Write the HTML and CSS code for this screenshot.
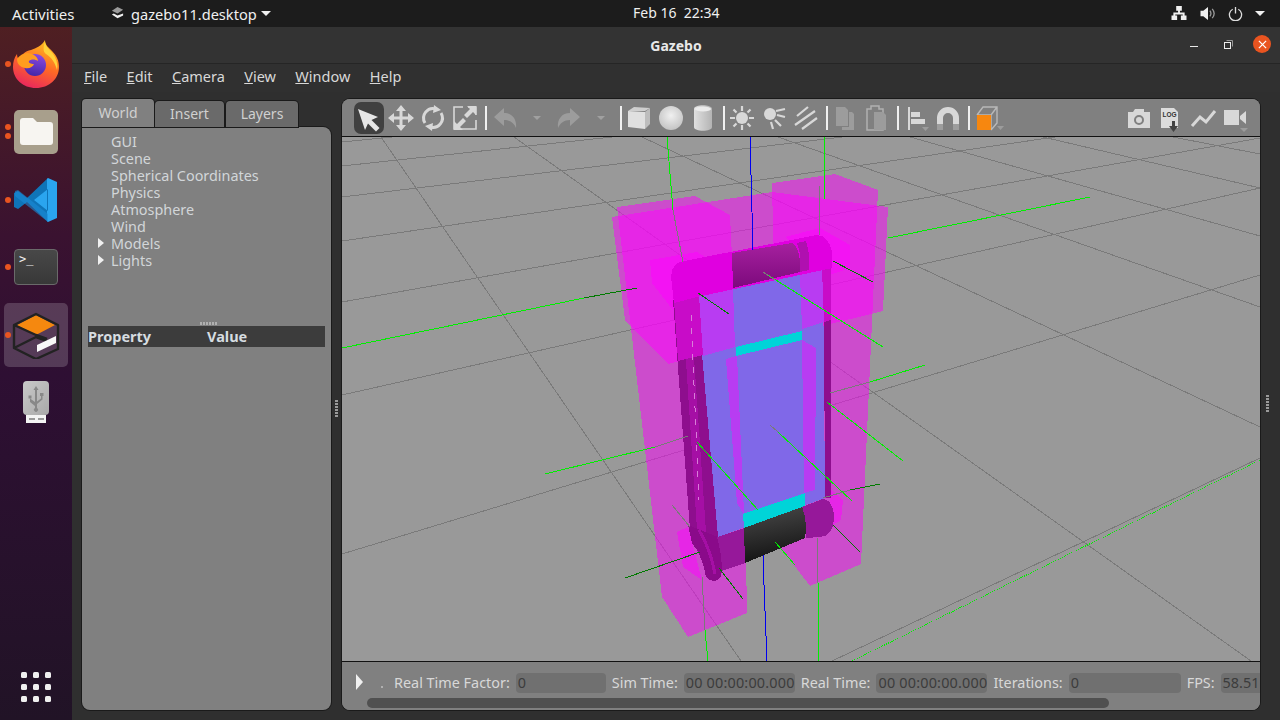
FILE: index.html
```html
<!DOCTYPE html>
<html lang="en">
<head>
  <meta charset="UTF-8" />
  <title>Gazebo</title>
  <link rel="stylesheet" href="styles.css">
</head>
<body>
  <header class="topbar">
    <div class="top-left">
      <span class="activities">Activities</span>
      <span class="app-menu">
        <svg class="app-icon" viewBox="0 0 16 16"><path class="ic-grey" d="M2 5l6-4 6 3-6 4z"/><path class="ic-white" d="M2 9l2-1 4 2 6-2v2l-6 3z"/></svg>
        gazebo11.desktop
        <i class="caret"></i>
      </span>
    </div>
    <div class="clock">Feb 16&nbsp;&nbsp;22:34</div>
    <div class="tray">
      <svg class="tray-net" viewBox="0 0 16 16"><path class="ic-white" d="M5 0h6v5H9v2h5v3h2v5h-6v-5h2V9H4v1h2v5H0v-5h2V7h5V5H5z"/></svg>
      <svg class="tray-vol" viewBox="0 0 16 16"><path class="ic-white" d="M0 5h3l5-4v14l-5-4H0z"/><path class="ic-line" d="M10 5c1.500 2 1.500 4 0 6M12.500 3c2.500 3 2.500 7 0 10"/></svg>
      <svg class="tray-pow" viewBox="0 0 16 16"><path class="ic-line-w" d="M5 3.500a6.500 6.500 0 1 0 6 0M8 1v7"/></svg>
      <i class="caret"></i>
    </div>
  </header>

  <div class="desktop">
    <nav class="dock">
      <div class="dock-item">
        <i class="pip pip-1"></i>
        <svg class="dock-icon" viewBox="0 0 48 48">
          <defs>
            <linearGradient id="ffBody" x1="0.7" y1="0" x2="0.3" y2="1"><stop offset="0" stop-color="#ffc21f"/><stop offset="0.5" stop-color="#ff6a25"/><stop offset="1" stop-color="#e8255f"/></linearGradient>
            <linearGradient id="ffBall" x1="0.6" y1="0" x2="0.4" y2="1"><stop offset="0" stop-color="#8c4ae0"/><stop offset="1" stop-color="#4226a8"/></linearGradient>
          </defs>
          <path fill="url(#ffBody)" d="M33 0c0 5 3 7 7 11 5 5 7 10 7 16 0 12-10 21-23 21S1 39 1 27c0-5 1-9 4-13 0 3 1 5 3 6 1-5 5-9 11-10 5-2 11-4 14-10z"/>
          <circle cx="23" cy="25" r="11" fill="url(#ffBall)"/>
          <path fill="#ff9d1f" d="M5 19c4-6 12-8 17-4 3 2 4 4 4 6-3-2-7-2-9 0-1 2 2 3 5 3-1 3-5 5-9 4-5-1-8-4-8-9z"/>
          <path fill="#ffd23a" d="M33 2c1 6 6 8 10 15 2 4 3 9 2 13-2-8-6-13-11-16-3-2-3-7-1-12z"/>
        </svg>
      </div>
      <div class="dock-item">
        <i class="pip pip-2a"></i><i class="pip pip-2b"></i>
        <svg class="dock-icon" viewBox="-1 0 48 48">
          <rect x="1" y="2" width="44" height="44" rx="5" fill="#a89f8c"/>
          <path fill="#f7f5f1" d="M7 13a3 3 0 0 1 3-3h10l4 4h13a3 3 0 0 1 3 3v17a3 3 0 0 1-3 3H10a3 3 0 0 1-3-3z"/>
        </svg>
      </div>
      <div class="dock-item">
        <i class="pip pip-1"></i>
        <svg class="dock-icon" viewBox="0 0 48 48">
          <path fill="#0f74b8" d="M36 2L15 22 6 15l-4 2v14l4 2 9-7 21 20z"/>
          <path fill="#2aa5ef" d="M36 2l9 4v36l-9 4-1-1V3zM36 13L22 24l14 11z"/>
          <path fill="#1a8ad6" d="M3 15l3-1 30 24v8L3 20z" opacity="0.6"/>
        </svg>
      </div>
      <div class="dock-item">
        <i class="pip pip-1"></i>
        <div class="term-icon">&gt;_</div>
      </div>
      <div class="dock-item dock-active">
        <i class="pip pip-1"></i>
        <svg class="dock-icon" viewBox="0 0 48 48">
          <path fill="#f5880f" d="M5 14L24 4l19 10-19 10z"/>
          <path class="gz-line" d="M2 14L24 3l22 11-0 24-22 10L2 37zM2 14l22 10 11 4M2 37l22-11 11 4"/>
          <path fill="#f8f8f8" d="M25 41v-7l19-9v7z"/>
        </svg>
      </div>
      <div class="dock-item">
        <svg class="dock-icon" viewBox="0 -3 48 48">
          <defs><linearGradient id="usbBody" x1="0" y1="0" x2="1" y2="1"><stop offset="0" stop-color="#c9c9c9"/><stop offset="1" stop-color="#a9a9a9"/></linearGradient></defs>
          <path fill="#f4f4f4" d="M14 34h20v8H14z"/>
          <path fill="#9a9a9a" d="M17 37h6v2h-6zM26 37h6v2h-6z"/>
          <rect x="11" y="0" width="26" height="34" rx="4" fill="url(#usbBody)"/>
          <path fill="#888" d="M24 5l2.500 4h-1.500v11.500l4-3V15h-1v-3h3.500v3h-1v3.500l-5.500 4.500V27a2 2 0 1 1-2 0v-2l-5-4v-3.500h-1.500v-3h3v3H18l5 3.500V9h-1.500z"/>
        </svg>
      </div>
      <div class="dock-spacer"></div>
      <div class="apps-grid">
        <i></i><i></i><i></i><i></i><i></i><i></i><i></i><i></i><i></i>
      </div>
    </nav>

    <main class="window">
      <div class="titlebar">
        <span class="title">Gazebo</span>
        <div class="win-btns">
          <i class="win-min"></i>
          <svg class="win-max" viewBox="0 0 9 9"><path class="max-back" d="M2.500 0.500h6v6"/><rect class="max-front" x="0.500" y="2.500" width="6" height="6"/></svg>
          <span class="win-close"><svg viewBox="0 0 10 10"><path d="M1 1l8 8M9 1l-8 8"/></svg></span>
        </div>
      </div>

      <div class="menubar">
        <span><u>F</u>ile</span>
        <span><u>E</u>dit</span>
        <span><u>C</u>amera</span>
        <span><u>V</u>iew</span>
        <span><u>W</u>indow</span>
        <span><u>H</u>elp</span>
      </div>

      <div class="workspace">
        <section class="side">
          <div class="tabs">
            <div class="tab tab-on">World</div>
            <div class="tab">Insert</div>
            <div class="tab tab-last">Layers</div>
          </div>
          <div class="side-panel">
            <ul class="tree">
              <li>GUI</li>
              <li>Scene</li>
              <li>Spherical Coordinates</li>
              <li>Physics</li>
              <li>Atmosphere</li>
              <li>Wind</li>
              <li class="has-kids">Models</li>
              <li class="has-kids">Lights</li>
            </ul>
            <div class="h-handle"></div>
            <div class="props-head"><span class="prop-name">Property</span><span>Value</span></div>
          </div>
        </section>

        <div class="v-handle"></div>

        <section class="scene-panel">
          <div class="toolbar">
            <button class="tb tb-on"><svg viewBox="0 0 32 32"><path class="t-bright" d="M5 7l20 8-6.500 3 8 8-3.500 3.500-8-8-3 6.500z"/></svg></button>
            <button class="tb"><svg viewBox="0 0 32 32"><path class="t-light" d="M16 3l5 6h-3.500v5.500H23V11l6 5-6 5v-3.500h-5.500V23H21l-5 6-5-6h3.500v-5.500H9V21l-6-5 6-5v3.500h5.500V9H11z"/></svg></button>
            <button class="tb"><svg viewBox="0 0 32 32"><path class="t-stroke" d="M8 21a9.500 9.500 0 0 1 11-14M24 11a9.500 9.500 0 0 1-11 14"/><path class="t-light" d="M17 3l7 5-8 3zM15 29l-7-5 8-3z"/></svg></button>
            <button class="tb"><svg viewBox="0 0 32 32"><path class="t-thin" d="M14 5H5v22h22v-9M5 5"/><path class="t-thin" d="M27 13V5h-8"/><path class="t-light" d="M27 4v9l-3-3-6 6-3-3 6-6-3-3zM5 28v-9l3 3 6-6 3 3-6 6 3 3z"/></svg></button>
            <i class="sep sep-first"></i>
            <button class="tb"><svg viewBox="0 0 32 32"><path class="t-dim" d="M5 15l10-9v5c8 0 13 6 12 15-2-5-6-8-12-8v6z"/></svg></button>
            <button class="tb"><i class="drop"></i></button>
            <button class="tb"><svg viewBox="0 0 32 32"><path class="t-dim" d="M27 15L17 6v5C9 11 4 17 5 26c2-5 6-8 12-8v6z"/></svg></button>
            <button class="tb"><i class="drop"></i></button>
            <i class="sep sep-second"></i>
            <button class="tb"><svg viewBox="0 0 32 32"><path fill="#cfcfcf" d="M5 9l6-4 16 1-5 3z"/><path fill="#e0e0e0" d="M5 9l17 1v17L5 25z"/><path fill="#bdbdbd" d="M22 10l5-4v16l-5 5z"/></svg></button>
            <button class="tb"><svg viewBox="0 0 32 32"><defs><radialGradient id="ball" cx="0.5" cy="0.4" r="0.7"><stop offset="0" stop-color="#f0f0f0"/><stop offset="1" stop-color="#bdbdbd"/></radialGradient></defs><circle cx="16" cy="16" r="12" fill="url(#ball)"/></svg></button>
            <button class="tb"><svg viewBox="0 0 32 32"><defs><linearGradient id="cyl"><stop offset="0" stop-color="#e0e0e0"/><stop offset="1" stop-color="#b4b4b4"/></linearGradient></defs><path fill="url(#cyl)" d="M7 7c0-5 18-5 18 0v18c0 5-18 5-18 0z"/><ellipse cx="16" cy="7" rx="8" ry="2.500" fill="#ececec"/></svg></button>
            <i class="sep"></i>
            <button class="tb"><svg viewBox="0 0 32 32"><circle cx="16" cy="16" r="6" class="t-light"/><path class="t-stroke-thin" d="M16 4v5M16 23v5M4 16h5M23 16h5M7.500 7.500l3 3M21.500 21.500l3 3M7.500 24.500l3-3M21.500 10.500l3-3"/></svg></button>
            <button class="tb"><svg viewBox="0 0 32 32"><circle cx="12" cy="12" r="6" class="t-light"/><path class="t-stroke-thin" d="M18 9l9-2M19 13l8 2M17 18l6 6M13 20l2 7"/></svg></button>
            <button class="tb"><svg viewBox="0 0 32 32"><path class="t-stroke-thin" d="M7 14L18 5M5 23L25 9M12 27L27 16"/></svg></button>
            <i class="sep"></i>
            <button class="tb"><svg viewBox="0 0 32 32"><path class="t-dim" d="M7 5h9l3 3v16H7z"/><path class="t-dim" d="M20 10h3l2 2v16H13v-3h7z"/></svg></button>
            <button class="tb"><svg viewBox="0 0 32 32"><path class="t-frame" d="M6 7h4V4h8v3h4v21H6z"/><path class="t-dim" d="M13 10h9l3 3v15H13z"/></svg></button>
            <i class="sep"></i>
            <button class="tb"><svg viewBox="0 0 32 32"><path class="t-light" d="M8 5h2v23H8zM11 10h9v5h-9zM11 17h14v5H11z"/><path class="t-dim" d="M22 25h7l-3.500 4z"/></svg></button>
            <button class="tb"><svg viewBox="0 0 32 32"><path class="t-light" d="M5 28V16a11 11 0 0 1 22 0v12h-6V16a5 5 0 0 0-10 0v12z"/><path fill="#9d9d9d" d="M5 22h6v6H5zM21 22h6v6h-6z"/></svg></button>
            <i class="sep sep-last"></i>
            <button class="tb"><svg viewBox="0 0 32 32"><path class="t-wire" d="M4 13l6-8h14v16l-6 7M18 13l6-8M4 13h14v15"/><rect x="4" y="13" width="14" height="15" fill="#f7870f"/><path class="t-dim" d="M24 24h7l-3.500 4z"/></svg></button>
            <div class="tb-spacer"></div>
            <button class="tb"><svg viewBox="0 0 32 32"><path class="t-light" fill-rule="evenodd" d="M5 10h5l2-3h9v3h6v16H5zM16 13a5 5 0 1 0 0 10 5 5 0 0 0 0-10zM16 15a3 3 0 1 1 0 6 3 3 0 0 1 0-6z"/></svg></button>
            <button class="tb"><svg viewBox="0 0 32 32"><path fill="#dcdcdc" d="M6 6h13l4 4v16H6z"/><path fill="#444" d="M17 19h3v5h3l-4.500 6-4.500-6h3z"/><text x="7.500" y="15" class="log-text">LOG</text></svg></button>
            <button class="tb"><svg viewBox="0 0 32 32"><path class="t-stroke" d="M5 24l8-9 6 5 9-11"/></svg></button>
            <button class="tb"><svg viewBox="0 0 32 32"><path class="t-light" d="M5 8h15v15H5zM21 14l6-5v13l-6-5z"/><path class="t-dim" d="M21 26h8l-4 4z"/></svg></button>
          </div>

          <div class="viewport">
            <svg class="scene" viewBox="342 137 918 524" preserveAspectRatio="none">
              <defs>
                <linearGradient id="tubeTop" x1="0" y1="0" x2="0" y2="1"><stop offset="0" stop-color="#a6209f"/><stop offset="1" stop-color="#7c0a7c"/></linearGradient>
                <linearGradient id="tubeLow" x1="0" y1="0" x2="0.200" y2="1"><stop offset="0" stop-color="#4a4a4a"/><stop offset="1" stop-color="#141414"/></linearGradient>
              </defs>

              <g class="grid">
                <path d="M342 142L392 137M342 166L612 137M342 197L842 137M342 241L1055 137M342 302L1260 138M342 395L1260 188M342 554L1260 275M832 661L1260 458"/>
                <path d="M381 137L741 661M514 137L1251 661M642 137L1260 427M778 137L1260 307M910 137L1260 236M1043 137L1260 188M1173 137L1260 154"/>
              </g>
              <path class="dots" d="M852 661L1260 460"/>

              <g class="hull">
                <path d="M612 217L772 192L888 207L883 311L668 364L625 320Z"/>
                <path d="M617 207L695 196L730 215L746 557L747 613L688 637L662 597Z"/>
                <path d="M772 183L835 174L878 190L861 564L810 586L780 547Z"/>
                <path d="M650 260L697 252L718 265L718 293L673 310L652 283Z"/>
                <path d="M785 237L820 228L850 245L850 268L830 275Z"/>
                <path d="M677 532L688 527L702 580L683 567Z"/>
                <path d="M828 487L843 500L841 520L833 525Z"/>
              </g>

              <path class="plate" d="M697 297L823 268L825 498L718 537Z"/>
              <path class="plate-on" d="M697 297L733 288L735 347L703 356Z"/>
              <path class="plate-on" d="M800 274L823 268L824 322L802 329Z"/>
              <path class="plate-on" d="M726 359L737 356L744 513L743 513L737 503Z"/>
              <path class="plate-on" d="M802 340L816 348L815 490L804 493Z"/>
              <path class="cyan" d="M736 347L802 331L802 340L736 356Z"/>
              <path class="cyan" d="M743 514L805 493L805 507L744 528Z"/>

              <path class="rail" d="M673 300L697 297L718 537L690 530Z"/>
              <path class="rail-in" d="M682 300L690 299L706 532L697 530Z"/>
              <path class="rail-top" d="M672 270L697 265L703 355L678 361Z"/>
              <path class="rail" d="M824 322L831 320L831 498L825 498Z"/>
              <path class="rail-top" d="M822 268L831 265L831 320L824 322Z"/>
              <path class="dash" d="M691 315L699 500"/>

              <path class="tube-on" d="M671 276C672 266 676 262 684 261L812 236C822 232 830 240 832 252L832 268L823 270L697 297L674 303Z"/>
              <path class="tube" fill="url(#tubeTop)" d="M732 253L792 243C798 246 801 258 800 272L733 288Z"/>
              <path class="tube-edge" d="M797 243L806 241C809 250 810 260 809 270L800 272C801 258 800 250 797 243Z"/>

              <path class="joint" d="M688 525L718 537C722 550 724 570 720 578C716 583 709 581 706 577C704 566 700 552 692 543Z"/>
              <path class="joint-in" d="M699 530C706 542 712 556 715 574"/>
              <path class="tube-low" d="M717 537L744 528L745 563L722 571C722 560 720 548 717 537Z"/>
              <path class="tube-low" d="M802 507L820 500C828 496 834 506 834 518C834 530 828 537 820 537L806 538Z"/>
              <path class="tube" fill="url(#tubeLow)" d="M744 528L802 507C806 516 807 527 805 538L745 563Z"/>

              <g class="ax-g">
                <path d="M667 137L673 210M825 137L824 200M342 348L584 298M888 238L1090 197M763 272L883 347M545 474L655 447M697 442L758 510M778 432L852 501M827 402L903 461M870 382L925 365M775 542L795 565M705 630L708 661M818 583L818 661"/>
              </g>
              <g class="ax-d">
                <path d="M584 298L637 288M698 293L729 314M833 261L873 282M833 525L860 552M850 490L880 484M625 578L700 552M719 568L743 599"/>
              </g>
              <g class="ax-m">
                <path d="M673 210L683 262M819 186L819 235M655 447L688 436M763 272L775 280M770 425L778 432M830 393L870 382M823 498L850 490M672 505L690 527M702 577L705 630M817 537L818 583"/>
              </g>
              <path class="ax-b" d="M750 137L752 212L753 250M763 555L764 585L767 661"/>
            </svg>
          </div>

          <div class="statusbar">
            <div class="stat-row">
              <i class="play"></i>
              <i class="dot"></i>
              <label class="stat-label">Real Time Factor:</label>
              <span class="field f-rtf">0</span>
              <label class="stat-label">Sim Time:</label>
              <span class="field f-time">00 00:00:00.000</span>
              <label class="stat-label">Real Time:</label>
              <span class="field f-time">00 00:00:00.000</span>
              <label class="stat-label">Iterations:</label>
              <span class="field f-iter">0</span>
              <label class="stat-label">FPS:</label>
              <span class="field f-fps">58.51</span>
            </div>
            <div class="hscroll"></div>
          </div>
        </section>

        <div class="v-handle v-handle-r"></div>
      </div>
    </main>
  </div>
</body>
</html>
```

FILE: styles.css
```css
* { box-sizing: border-box; }
html, body { margin: 0; height: 100%; overflow: hidden; }
body { font-family: "Noto Sans", sans-serif; font-size: 14.4px; color: #d8d8d8; background: #2f2f2f; display: flex; flex-direction: column; }

/* top bar */
.topbar { height: 27px; background: #1c1c1c; color: #f0f0f0; display: flex; align-items: center; position: relative; font-size: 14.6px; }
.top-left { display: flex; align-items: center; padding-left: 12px; }
.activities { width: 98px; font-size: 15px; }
.app-menu { display: flex; align-items: center; gap: 6px; }
.app-menu .caret { margin-left: -2px; }
.app-icon { width: 15px; height: 15px; }
.ic-grey { fill: #9a9a9a; }
.ic-white { fill: #f0f0f0; }
.ic-line { fill: none; stroke: #999; stroke-width: 1.4; }
.ic-line-w { fill: none; stroke: #ddd; stroke-width: 1.4; }
.caret { display: inline-block; width: 0; height: 0; border-left: 5px solid transparent; border-right: 5px solid transparent; border-top: 5px solid #f0f0f0; }
.clock { position: absolute; left: 633px; top: 4px; line-height: 18px; font-size: 14px; }
.tray { margin-left: auto; display: flex; align-items: center; padding-right: 15px; }
.tray-net { width: 16px; height: 15px; margin-right: 13px; }
.tray-vol { width: 16px; height: 15px; margin-right: 12px; }
.tray-pow { width: 15px; height: 15px; margin-right: 12px; }

.desktop { flex: 1; display: flex; min-height: 0; }

/* dock */
.dock { width: 72px; padding-top: 3.4px; padding-bottom: 18px; display: flex; flex-direction: column; align-items: center; background: linear-gradient(180deg, #4f1f22 0, #3a1230 30%, #2e0f33 50%, #211326 100%); }
.dock-item { width: 64px; height: 64px; margin: 2px 0 1.6px; display: flex; align-items: center; justify-content: center; position: relative; border-radius: 5px; }
.dock-active { background: rgba(255, 255, 255, 0.18); }
.dock-icon { width: 48px; height: 48px; }
.pip { position: absolute; left: 1px; top: 29px; width: 6px; height: 6px; border-radius: 50%; background: #e95420; }
.pip-2a { top: 24px; }
.pip-2b { top: 33px; }
.term-icon { width: 44px; height: 36px; border-radius: 4px; background: linear-gradient(#484848, #383838); border: 1px solid #6a6a6a; color: #f0f0f0; font-family: "DejaVu Sans Mono", monospace; font-size: 12px; line-height: 14px; padding: 2px 0 0 4px; }
.gz-line { fill: none; stroke: #222; stroke-width: 2.4; stroke-linejoin: round; }
.dock-spacer { flex: 1; }
.apps-grid { display: grid; grid-template-columns: repeat(3, 6px); gap: 6px; }
.apps-grid i { width: 6px; height: 6px; border-radius: 1.5px; background: #f0f0f0; }

/* window */
.window { flex: 1; display: flex; flex-direction: column; min-width: 0; background: #2f2f2f; }
.titlebar { height: 37px; background: #333; border-bottom: 1px solid #252525; display: flex; align-items: center; justify-content: center; position: relative; }
.title { font-weight: 700; font-size: 14px; color: #e8e8e8; }
.win-btns { position: absolute; right: 9px; top: 8px; display: flex; align-items: center; }
.win-min { width: 8px; height: 1px; background: #e8e8e8; margin-right: 26px; margin-top: 4px; }
.win-max { width: 9px; height: 9px; margin-right: 20px; }
.max-back { fill: none; stroke: #999; }
.max-front { fill: none; stroke: #eee; }
.win-close { width: 18px; height: 18px; border-radius: 50%; background: #e95420; display: flex; align-items: center; justify-content: center; }
.win-close svg { width: 9px; height: 9px; fill: none; stroke: #fff; stroke-width: 1.4; }

.menubar { height: 28px; display: flex; align-items: center; padding: 0 0 5px 12px; gap: 19.4px; background: #303030; color: #d8d8d8; font-size: 14.5px; }

.workspace { flex: 1; min-height: 0; display: flex; padding: 7px 0 10px 10px; }

/* left side */
.side { width: 249px; display: flex; flex-direction: column; }
.tabs { height: 28px; display: flex; align-items: flex-end; position: relative; z-index: 1; font-size: 14px; }
.tab { height: 26px; width: 69px; padding-bottom: 1px; background: #6a6a6a; box-shadow: 0 0 0 1px #1a1a1a; border-radius: 4px 4px 0 0; color: #d0d0d0; display: flex; align-items: center; justify-content: center; margin-left: 1px; }
.tab-last { width: 72px; margin-left: 2px; }
.tab-on { height: 28px; width: 72px; margin-left: 0; background: #808080; }
.side-panel { flex: 1; background: #808080; box-shadow: 0 0 0 1px #1a1a1a; border-radius: 0 8px 8px 8px; display: flex; flex-direction: column; padding-top: 6px; }
.tree { list-style: none; margin: 0; padding: 0 0 0 29px; height: 187px; color: #d2d6d9; }
.tree li { height: 17px; line-height: 17px; position: relative; }
.has-kids::before { content: ""; position: absolute; left: -13px; top: 3px; border-left: 6px solid #f0f0f0; border-top: 5px solid transparent; border-bottom: 5px solid transparent; }
.h-handle { width: 17px; height: 3px; margin: 2px 0 1px 118px; background: repeating-linear-gradient(90deg, #b0b0b0 0 2px, transparent 2px 3px); }
.props-head { height: 21px; margin: 0 6px; padding-bottom: 2px; background: #3c3c3c; display: flex; align-items: center; font-weight: 700; font-size: 14.5px; color: #d6dce0; }
.prop-name { width: 119px; }

.v-handle { width: 11px; position: relative; }
.v-handle::after { content: ""; position: absolute; left: 4px; top: 301px; width: 3px; height: 17px; background: repeating-linear-gradient(180deg, #9a9a9a 0 2px, transparent 2px 3px); }
.v-handle-r { width: 20px; }
.v-handle-r::after { left: 6px; top: 296px; }

/* scene */
.scene-panel { flex: 1; min-width: 0; display: flex; flex-direction: column; background: #808080; box-shadow: 0 0 0 1px #1a1a1a; border-radius: 8px; overflow: hidden; }
.toolbar { height: 38px; flex: none; display: flex; align-items: center; padding: 0 9px 0 11px; background: #808080; border-bottom: 1px solid #111; }
.tb { width: 32px; height: 32px; padding: 0; border: none; background: none; display: flex; align-items: center; justify-content: center; border-radius: 7px; }
.tb svg { width: 32px; height: 32px; flex: none; }
.tb-on { width: 30px; margin: 0 1px; background: #404040; }
.tb-spacer { flex: 1; }
.sep { width: 2px; height: 24px; background: #f0f0f0; margin: 0 1px 0 4px; }
.sep-first { margin-right: 2px; }
.sep-second { margin-left: 3px; }
.sep-last { margin-right: 3px; }
.drop { width: 0; height: 0; border-left: 4px solid transparent; border-right: 4px solid transparent; border-top: 4px solid #a0a0a0; }
.t-bright { fill: #e6e6e6; }
.t-light { fill: #d8d8d8; }
.t-dim { fill: #9c9c9c; }
.t-stroke { fill: none; stroke: #d8d8d8; stroke-width: 3; }
.t-stroke-thin { fill: none; stroke: #d8d8d8; stroke-width: 2.2; }
.t-thin { fill: none; stroke: #d8d8d8; stroke-width: 1.6; }
.t-frame { fill: none; stroke: #b0b0b0; stroke-width: 1.5; }
.t-wire { fill: none; stroke: #b8b8b8; stroke-width: 1.4; }
.log-text { font-family: "Liberation Sans", sans-serif; font-size: 6.5px; font-weight: 700; fill: #333; }

.viewport { height: 524px; flex: none; background: #999; }
.scene { display: block; width: 100%; height: 100%; shape-rendering: crispEdges; }
.grid path { fill: none; stroke: #7a7a7a; stroke-width: 1; }
.dots { fill: none; stroke: #00f000; stroke-width: 1; stroke-dasharray: 1 1; }
.hull path { fill: #ff00ff; fill-opacity: 0.5; }
.plate { fill: #8068e8; }
.plate-on { fill: #b83cf2; }
.cyan { fill: #00d4d8; }
.rail { fill: #8e0e8e; }
.rail-in { fill: #a50fa5; }
.rail-top { fill: #c80cc8; }
.dash { fill: none; stroke: #d87ed8; stroke-dasharray: 6 7; }
.tube-on { fill: #e000e0; }
.tube-edge { fill: #b010b0; }
.joint { fill: #8a0a8a; }
.joint-in { fill: none; stroke: #a50fa5; stroke-width: 3; }
.tube-low { fill: #96189a; }
.ax-g path { fill: none; stroke: #00f000; }
.ax-d path { fill: none; stroke: #007a00; }
.ax-m path { fill: none; stroke: #7a7a7a; }
.ax-b { fill: none; stroke: #0000f0; }

/* status */
.statusbar { flex: 1; border-top: 1px solid #111; display: flex; flex-direction: column; background: #808080; }
.stat-row { height: 36px; display: flex; align-items: center; padding: 5px 0 0 14px; gap: 6px; white-space: nowrap; overflow: hidden; }
.play { border-left: 7px solid #f0f0f0; border-top: 8px solid transparent; border-bottom: 8px solid transparent; margin-right: 12px; margin-top: -1px; }
.dot { width: 2px; height: 2px; background: #b0b0b0; margin: 8px 5px 0 0; }
.stat-label { color: #d8d8d8; }
.field { height: 20px; line-height: 20px; background: #707070; border-radius: 4px; padding-left: 2px; color: #3c3c3c; flex: none; overflow: hidden; }
.f-rtf { width: 90px; }
.f-time { width: 111px; letter-spacing: 0.2px; }
.f-iter { width: 112px; }
.f-fps { width: 39px; border-radius: 4px 0 0 4px; }
.hscroll { width: 742px; height: 10px; margin: 0 0 0 25px; background: #505050; border-radius: 5px; }
```
